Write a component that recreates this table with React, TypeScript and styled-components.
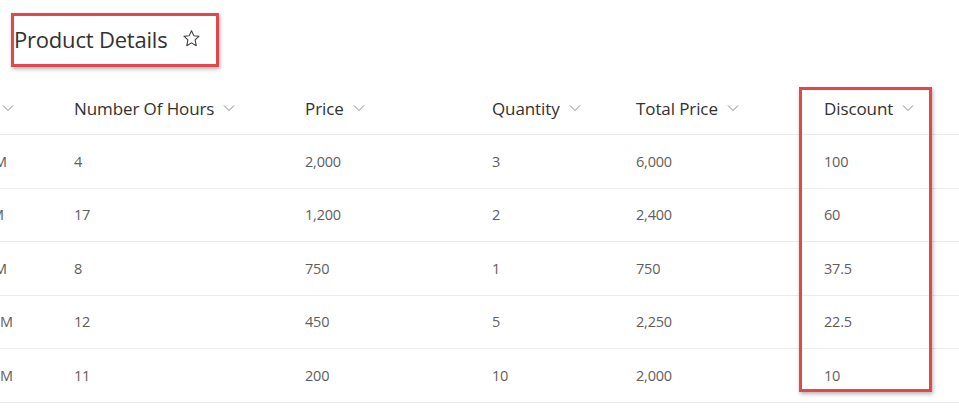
import React from 'react';
import styled, { createGlobalStyle } from 'styled-components';

const GlobalStyle = createGlobalStyle`
  html, body {
    margin: 0;
    padding: 0;
    background: #ffffff;
    overflow: hidden;
  }
  body {
    font-family: 'Open Sans', 'Noto Sans', sans-serif;
    color: #323130;
  }
`;

const Page = styled.div`
  position: relative;
  width: 959px;
  height: 412px;
  overflow: hidden;
  background: #ffffff;
`;

const TitleBar = styled.div`
  display: flex;
  padding: 13px 0 0 11px;
  height: 82px;
  box-sizing: border-box;
`;

const TitleBox = styled.div`
  display: flex;
  align-items: center;
  gap: 15px;
  width: 208px;
  height: 54px;
  box-sizing: border-box;
  padding: 0 0 3px 0;
  border: 3px solid #e2474c;
  box-shadow: 1px 2px 4px rgba(0, 0, 0, 0.3);
`;

const Title = styled.h1`
  margin: 0;
  font-size: 22px;
  font-weight: 400;
  color: #323130;
  letter-spacing: -0.2px;
`;

const Table = styled.div`
  display: flex;
  flex-direction: column;
`;

const Row = styled.div<{ header?: boolean }>`
  display: grid;
  grid-template-columns: 74px 231px 187px 144px 188px 135px;
  align-items: center;
  height: ${p => (p.header ? '53px' : '53.5px')};
  box-sizing: border-box;
  border-bottom: 1px solid #edebe9;
`;

const HeadCell = styled.div`
  display: flex;
  align-items: center;
  gap: 9px;
  font-size: 17px;
  color: #323130;
  white-space: nowrap;
  letter-spacing: -0.1px;
`;

const Cell = styled.div`
  font-size: 14.5px;
  color: #605e5c;
  white-space: nowrap;
  letter-spacing: -0.2px;
`;

const ClipCell = styled.div<{ shift: number }>`
  font-size: 14.5px;
  color: #605e5c;
  white-space: nowrap;
  margin-left: ${p => p.shift}px;
`;

const Highlight = styled.div`
  position: absolute;
  left: 799px;
  top: 87px;
  width: 133px;
  height: 305px;
  box-sizing: border-box;
  border: 3px solid #e2474c;
  box-shadow: 1px 2px 4px rgba(0, 0, 0, 0.3);
  pointer-events: none;
`;

const Chevron = () => (
  <svg width="12" height="8" viewBox="0 0 12 8" fill="none">
    <path d="M1 1.5 L6 6.5 L11 1.5" stroke="#8a8886" strokeWidth="1" />
  </svg>
);

const Star = () => (
  <svg width="19" height="19" viewBox="0 0 20 20" fill="none">
    <path
      d="M10 1.8 L12.4 7 L18 7.6 L13.8 11.4 L15 17.6 L10 14.6 L5 17.6 L6.2 11.4 L2 7.6 L7.6 7 Z"
      stroke="#3b3a39"
      strokeWidth="1.1"
      strokeLinejoin="round"
    />
  </svg>
);

const columns = ['Number Of Hours', 'Price', 'Quantity', 'Total Price', 'Discount'];

const rows = [
  { shift: -6, values: ['4', '2,000', '3', '6,000', '100'] },
  { shift: -9, values: ['17', '1,200', '2', '2,400', '60'] },
  { shift: -6, values: ['8', '750', '1', '750', '37.5'] },
  { shift: 0, values: ['12', '450', '5', '2,250', '22.5'] },
  { shift: 0, values: ['11', '200', '10', '2,000', '10'] },
];

const App: React.FC = () => {
  return (
    <Page>
      <GlobalStyle />
      <TitleBar>
        <TitleBox>
          <Title>Product Details</Title>
          <Star />
        </TitleBox>
      </TitleBar>
      <Table>
        <Row header>
          <HeadCell style={{ marginLeft: 2 }}>
            <Chevron />
          </HeadCell>
          {columns.map(name => (
            <HeadCell key={name}>
              {name}
              <Chevron />
            </HeadCell>
          ))}
        </Row>
        {rows.map((row, i) => (
          <Row key={i}>
            <ClipCell shift={row.shift}>M</ClipCell>
            {row.values.map((v, j) => (
              <Cell key={j}>{v}</Cell>
            ))}
          </Row>
        ))}
      </Table>
      <Highlight />
    </Page>
  );
};

export default App;
